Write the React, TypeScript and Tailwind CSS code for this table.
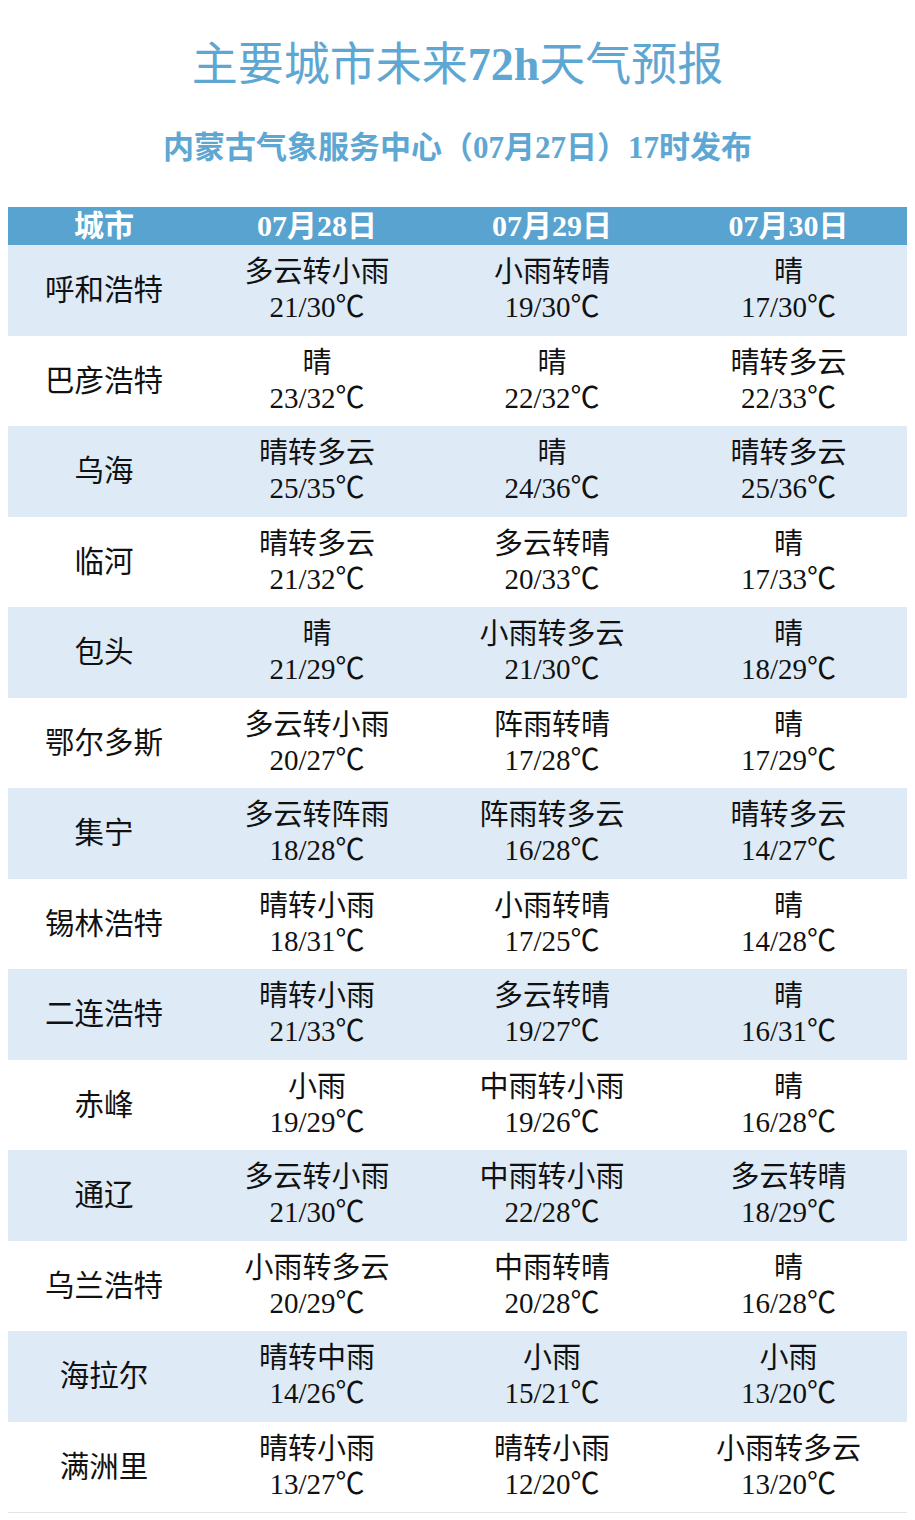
const rows: [string, string, string, string, string, string, string][] = [
  ['呼和浩特', '多云转小雨', '21/30℃', '小雨转晴', '19/30℃', '晴', '17/30℃'],
  ['巴彦浩特', '晴', '23/32℃', '晴', '22/32℃', '晴转多云', '22/33℃'],
  ['乌海', '晴转多云', '25/35℃', '晴', '24/36℃', '晴转多云', '25/36℃'],
  ['临河', '晴转多云', '21/32℃', '多云转晴', '20/33℃', '晴', '17/33℃'],
  ['包头', '晴', '21/29℃', '小雨转多云', '21/30℃', '晴', '18/29℃'],
  ['鄂尔多斯', '多云转小雨', '20/27℃', '阵雨转晴', '17/28℃', '晴', '17/29℃'],
  ['集宁', '多云转阵雨', '18/28℃', '阵雨转多云', '16/28℃', '晴转多云', '14/27℃'],
  ['锡林浩特', '晴转小雨', '18/31℃', '小雨转晴', '17/25℃', '晴', '14/28℃'],
  ['二连浩特', '晴转小雨', '21/33℃', '多云转晴', '19/27℃', '晴', '16/31℃'],
  ['赤峰', '小雨', '19/29℃', '中雨转小雨', '19/26℃', '晴', '16/28℃'],
  ['通辽', '多云转小雨', '21/30℃', '中雨转小雨', '22/28℃', '多云转晴', '18/29℃'],
  ['乌兰浩特', '小雨转多云', '20/29℃', '中雨转晴', '20/28℃', '晴', '16/28℃'],
  ['海拉尔', '晴转中雨', '14/26℃', '小雨', '15/21℃', '小雨', '13/20℃'],
  ['满洲里', '晴转小雨', '13/27℃', '晴转小雨', '12/20℃', '小雨转多云', '13/20℃'],
];

const font = { fontFamily: '"Liberation Serif", "Noto Sans CJK SC", serif' };

function Cell({ top, bottom }: { top: string; bottom: string }) {
  return (
    <div className="flex flex-col items-center justify-center text-[29px] leading-[35px] text-[#111]">
      <div>{top}</div>
      <div>{bottom}</div>
    </div>
  );
}

export default function App() {
  return (
    <div className="w-[915px] h-[1520px] bg-white" style={font}>
      <div className="pt-[37px] text-center text-[46px] leading-[56px] text-[#5ea7d3]">
        主要城市未来<span className="font-bold">72h</span>天气预报
      </div>
      <div className="mt-[35px] text-center text-[31px] leading-[40px] font-bold text-[#5ea7d3]">
        内蒙古气象服务中心（07月27日）17时发布
      </div>

      <div className="mx-[8px] mt-[39px] border-b border-[#e4e4e4]">
        <div className="grid grid-cols-[192px_234px_236px_237px] h-[38px] items-center bg-[#58a3cf] text-white font-bold text-[30px] leading-[38px]">
          <div className="text-center">城市</div>
          <div className="text-center">07月28日</div>
          <div className="text-center">07月29日</div>
          <div className="text-center">07月30日</div>
        </div>
        {rows.map((r, i) => (
          <div
            key={r[0]}
            className={`grid grid-cols-[192px_234px_236px_237px] h-[90.5px] ${i % 2 === 0 ? 'bg-[#deeaf6]' : 'bg-white'}`}
          >
            <div className="flex items-center justify-center text-[29.5px] text-[#111]">{r[0]}</div>
            <Cell top={r[1]} bottom={r[2]} />
            <Cell top={r[3]} bottom={r[4]} />
            <Cell top={r[5]} bottom={r[6]} />
          </div>
        ))}
      </div>
    </div>
  );
}
